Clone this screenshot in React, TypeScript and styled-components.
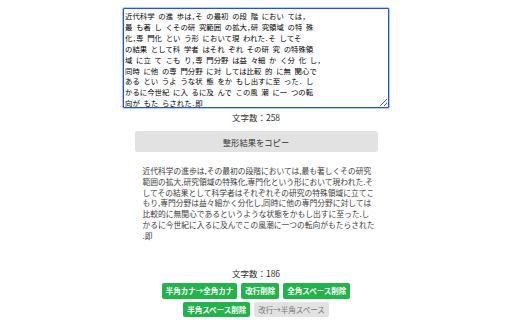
import { useState } from "react";
import styled, { createGlobalStyle } from "styled-components";

const GlobalStyle = createGlobalStyle`
  html, body {
    margin: 0;
    padding: 0;
    background: #ffffff;
  }
  body {
    font-family: "Noto Sans CJK JP", "Noto Sans", sans-serif;
    color: #333;
  }
`;

const SOURCE = [
  "近代科学 の進 歩は,そ の最初 の段 階 におい ては,",
  "最 も著 し くその研 究範囲 の拡大,研 究領域 の特 殊",
  "化,専 門化 とい う形 において現 われた.そ してそ",
  "の結果 として科 学者 はそれ ぞれ その研 究 の特殊領",
  "域 に立 て こも り,専 門分野 は益 々細 か く分 化 し,",
  "同時 に他 の専 門分野 に対 しては比較 的 に無 関心で",
  "ある とい うよ うな状 態 をか もし出すに至 った. し",
  "かるに今世紀 に入 るに及 んで この風 潮 に一 つの転",
  "向が もた らされた.即",
].join("\n");

const RESULT = SOURCE.replace(/[\s\u3000]/g, "");

interface ToolButtonProps {
  $muted?: boolean;
}

const actions: { label: string; muted?: boolean }[] = [
  { label: "半角カナ→全角カナ" },
  { label: "改行削除" },
  { label: "全角スペース削除" },
  { label: "半角スペース削除" },
  { label: "改行→半角スペース", muted: true },
];

export default function App() {
  const [text, setText] = useState(SOURCE);

  return (
    <>
      <GlobalStyle />
      <Page>
        <Editor
          value={text}
          onChange={(e) => setText(e.target.value)}
          spellCheck={false}
        />
        <Counter>文字数：258</Counter>
        <CopyButton type="button">整形結果をコピー</CopyButton>
        <Result>{RESULT}</Result>
        <Counter $spaced>文字数：186</Counter>
        <Actions>
          {actions.map((a) => (
            <ToolButton key={a.label} type="button" $muted={a.muted}>
              {a.label}
            </ToolButton>
          ))}
        </Actions>
      </Page>
    </>
  );
}

const Page = styled.main`
  display: flex;
  flex-direction: column;
  align-items: center;
  padding-top: 8px;
`;

const Editor = styled.textarea`
  box-sizing: border-box;
  width: 266px;
  height: 100px;
  margin: 0;
  padding: 2px 1px;
  border: 1px solid #1d56d1;
  border-radius: 1px;
  box-shadow: 0 0 0 0.6px rgba(29, 86, 209, 0.6);
  outline: none;
  font-family: "Noto Sans CJK JP", sans-serif;
  font-feature-settings: "hwid";
  font-size: 7.4px;
  line-height: 10.9px;
  color: #000;
  background: #fff;
  white-space: pre;
  overflow: hidden;
`;

const Counter = styled.div<{ $spaced?: boolean }>`
  margin-top: ${(p) => (p.$spaced ? "26px" : "4px")};
  font-size: 8.5px;
  line-height: 11px;
  color: #333;
`;

const CopyButton = styled.button`
  width: 243px;
  height: 21px;
  margin-top: 8px;
  padding: 0;
  border: none;
  border-radius: 3px;
  background: #e2e2e2;
  color: #333;
  font-family: inherit;
  font-size: 8.3px;
  cursor: pointer;
`;

const Result = styled.p`
  box-sizing: border-box;
  width: 243px;
  margin: 14px 0 0;
  padding: 0 2px 0 8px;
  font-size: 7.75px;
  line-height: 10.8px;
  color: #3c3c3c;
  line-break: anywhere;
`;

const Actions = styled.div`
  display: flex;
  flex-wrap: wrap;
  justify-content: center;
  gap: 3px 4px;
  width: 243px;
  margin-top: 4.5px;
`;

const ToolButton = styled.button<ToolButtonProps>`
  height: 15.5px;
  padding: 0 4px;
  border: none;
  border-radius: 2px;
  background: ${(p) => (p.$muted ? "#e2e2e2" : "#22b34a")};
  color: ${(p) => (p.$muted ? "#777" : "#fff")};
  font-family: inherit;
  font-size: 7.5px;
  font-weight: ${(p) => (p.$muted ? 400 : 700)};
  line-height: 15.5px;
  white-space: nowrap;
  cursor: pointer;
`;
